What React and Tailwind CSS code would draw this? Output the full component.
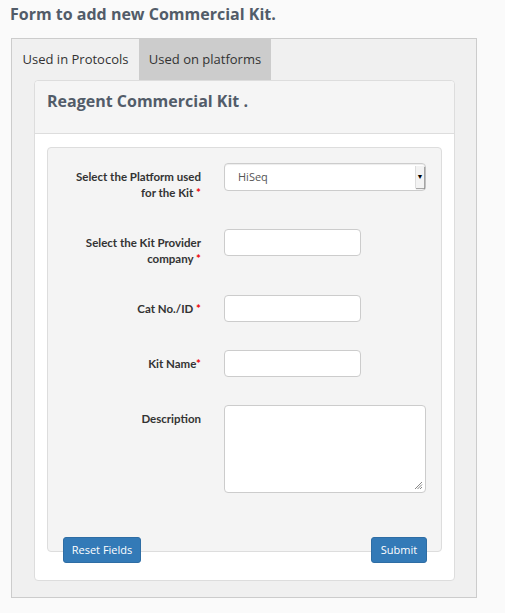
import React from "react";

const font = { fontFamily: '"Open Sans", "Noto Sans", sans-serif' };
const labelFont = { fontFamily: 'Lato, "Open Sans", sans-serif' };

function Label({ children }) {
  return (
    <div className="w-[153px] shrink-0 pt-[6px] text-right text-[11.5px] font-bold leading-4 text-[#333]" style={labelFont}>
      {children}
    </div>
  );
}

const Star = () => <span className="text-[#e00]"> *</span>;

export default function App() {
  return (
    <div className="min-h-[613px] w-[505px] bg-[#fafafa]" style={font}>
      <h1 className="pl-[10px] pt-[5px] text-[16px] font-bold leading-[18px] text-[#525c69]">
        Form to add new Commercial Kit.
      </h1>
      <div className="ml-[11px] mt-[15px] w-[466px] border border-[#ccc] bg-[#f0f0f0] pb-[16px]">
        <div className="flex h-[41px] text-[13px] text-[#333]">
          <div className="flex w-[127px] items-center justify-center">Used in Protocols</div>
          <div className="flex w-[132px] items-center justify-center bg-[#ccc]">Used on platforms</div>
        </div>
        <div className="ml-[22px] w-[421px] rounded-[4px] border border-[#ddd] bg-white">
          <div className="flex h-[53px] items-start rounded-t-[4px] border-b border-[#ddd] bg-[#f5f5f5] pl-[12px] pt-[10px]">
            <span className="text-[16px] font-bold leading-[20px] text-[#525c69]">Reagent Commercial Kit .</span>
          </div>
          <div className="px-[12px] pt-[13px] pb-[17px]">
            <div className="h-[405px] rounded-[4px] border border-[#ddd] bg-[#f4f4f4] pt-[15px]">
              <div className="mb-[28px] flex items-start">
                <Label>
                  Select the Platform used
                  <br />
                  for the Kit<Star />
                </Label>
                <div className="ml-[23px] flex h-[28px] w-[202px] items-center rounded-[4px] border border-[#ccc] bg-white shadow-[inset_0_1px_1px_rgba(0,0,0,0.075)]">
                  <span className="flex-1 pl-[13px] text-[11px] text-[#555]">HiSeq</span>
                  <span className="mr-[1px] flex h-[22px] w-[9px] items-center justify-center border-l border-[#ddd] bg-[#f3f3f3] text-[7px] text-black shadow-[1px_1px_1px_rgba(0,0,0,0.35)]">▼</span>
                </div>
              </div>
              <div className="mb-[28px] flex items-start">
                <Label>
                  Select the Kit Provider
                  <br />
                  company<Star />
                </Label>
                <div className="ml-[23px] h-[27px] w-[137px] rounded-[4px] border border-[#ccc] bg-white" />
              </div>
              <div className="mb-[28px] flex items-start">
                <Label>
                  Cat No./ID<Star />
                </Label>
                <div className="ml-[23px] h-[27px] w-[137px] rounded-[4px] border border-[#ccc] bg-white" />
              </div>
              <div className="mb-[28px] flex items-start">
                <Label>
                  Kit Name<span className="text-[#e00]">*</span>
                </Label>
                <div className="ml-[23px] h-[27px] w-[137px] rounded-[4px] border border-[#ccc] bg-white" />
              </div>
              <div className="flex items-start">
                <Label>Description</Label>
                <div className="relative ml-[23px] h-[88px] w-[202px] rounded-[4px] border border-[#ccc] bg-white">
                  <svg className="absolute bottom-[2px] right-[2px]" width="9" height="9" viewBox="0 0 9 9">
                    <path d="M8 1 L1 8 M8 3.5 L3.5 8 M8 6 L6 8" stroke="#888" strokeWidth="1" fill="none" />
                  </svg>
                </div>
              </div>
            </div>
            <div className="relative -mt-[15px] flex justify-between px-[16px] pr-[15px]">
              <button className="h-[26px] w-[78px] rounded-[3px] border border-[#2e6da4] bg-[#337ab7] text-[11px] text-white">
                Reset Fields
              </button>
              <button className="h-[26px] w-[56px] rounded-[3px] border border-[#2e6da4] bg-[#337ab7] text-[11px] text-white">
                Submit
              </button>
            </div>
          </div>
        </div>
      </div>
    </div>
  );
}
